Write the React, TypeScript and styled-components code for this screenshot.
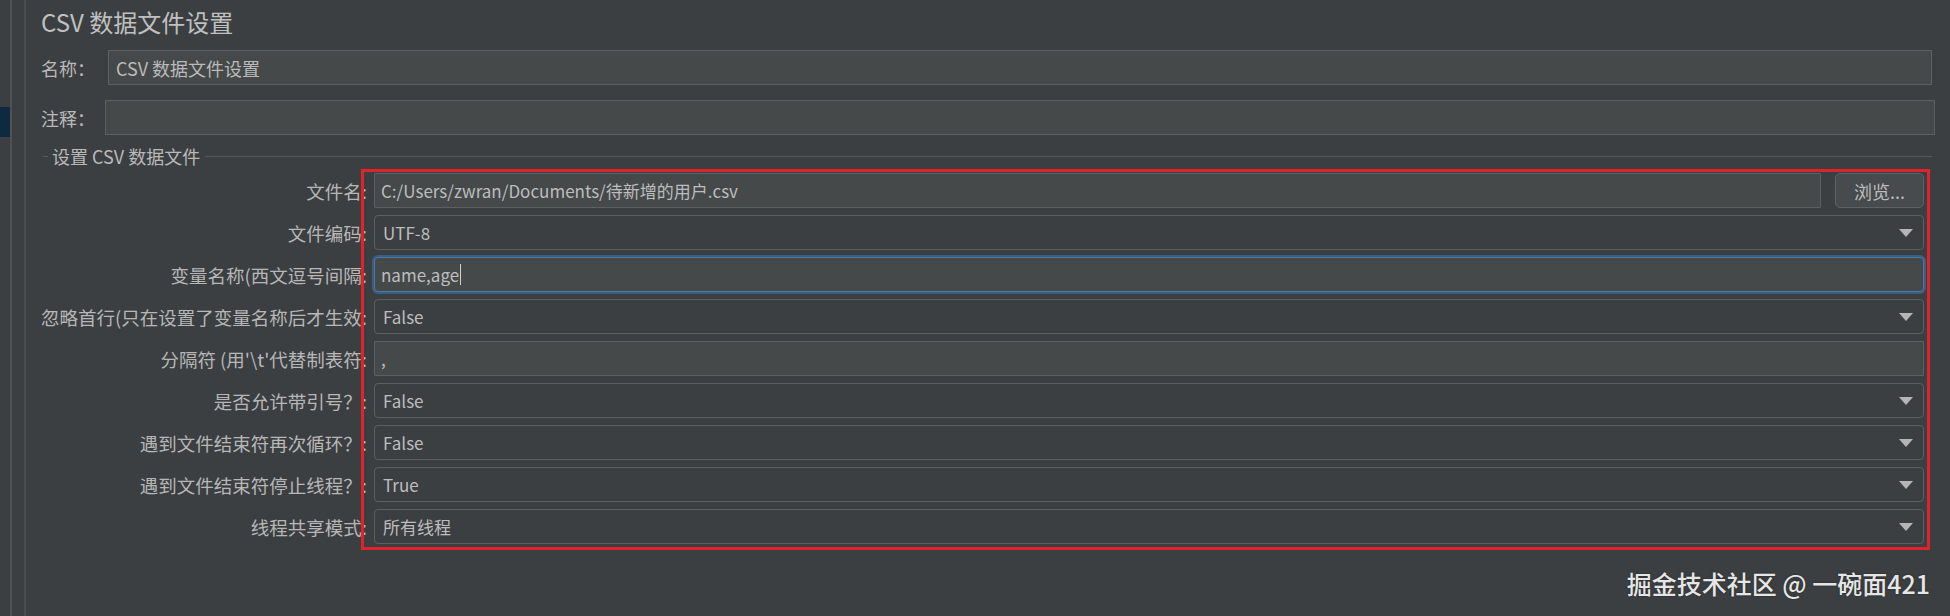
import React from "react";
import styled, { createGlobalStyle } from "styled-components";

/*
  Global
*/

const GlobalStyle = createGlobalStyle`
  html, body {
    margin: 0;
    padding: 0;
    background: #3c3f41;
  }

  body {
    font-family: "Noto Sans CJK SC", "Noto Sans", sans-serif;
  }
`;

/*
  Styled Components
*/

const Window = styled.div`
  position: relative;
  width: 1950px;
  height: 616px;
  display: flex;
  background: #3c3f41;
  color: #bbbbbb;
  overflow: hidden;
`;

const TreeStrip = styled.div`
  width: 10px;
  flex-shrink: 0;
  padding-top: 107px;
  box-sizing: border-box;
`;

const TreeSelection = styled.div`
  height: 30px;
  background: #0e2a40;
`;

const Divider = styled.div<{ $width: number; $color: string }>`
  width: ${(p) => p.$width}px;
  flex-shrink: 0;
  background: ${(p) => p.$color};
`;

const Gutter = styled.div`
  width: 12px;
  flex-shrink: 0;
`;

const Panel = styled.div`
  flex: 1;
  min-width: 0;
  padding: 0 15px;
  display: flex;
  flex-direction: column;
`;

const Title = styled.div`
  height: 44px;
  line-height: 44px;
  font-size: 24px;
  color: #c0c0c0;
  white-space: nowrap;
`;

const HeaderRow = styled.div<{ $top: number; $right: number }>`
  display: flex;
  align-items: center;
  height: 35px;
  margin-top: ${(p) => p.$top}px;
  margin-right: ${(p) => p.$right}px;
`;

const HeaderLabel = styled.div<{ $width: number }>`
  width: ${(p) => p.$width}px;
  flex-shrink: 0;
  font-size: 18px;
  color: #b9b9b9;
  white-space: nowrap;
`;

const PlainField = styled.div`
  flex: 1;
  height: 35px;
  box-sizing: border-box;
  display: flex;
  align-items: center;
  padding: 0 7px;
  background: #45494a;
  border: 1px solid #5d6061;
  font-size: 18px;
  color: #bbbbbb;
  white-space: nowrap;
`;

const GroupHeader = styled.div`
  display: flex;
  align-items: center;
  height: 20px;
  margin: 11px 3px 0 2px;
`;

const GroupDash = styled.div`
  width: 5px;
  height: 1px;
  background: #5a5d5f;
`;

const GroupTitle = styled.div`
  padding: 0 5px 0 4px;
  font-size: 18px;
  color: #b9b9b9;
  white-space: nowrap;
`;

const GroupLine = styled.div`
  flex: 1;
  height: 1px;
  background: #55585a;
`;

const Form = styled.div`
  display: grid;
  grid-template-columns: 326px 1fr;
  grid-auto-rows: 35px;
  column-gap: 7px;
  row-gap: 7px;
  margin: 7px 11px 0 0;
`;

const Label = styled.div`
  grid-column: 1;
  display: flex;
  justify-content: flex-end;
  align-items: center;
  min-width: 0;
  font-size: 18.5px;
  color: #b7b7b7;
  white-space: nowrap;
`;

const FieldCell = styled.div`
  grid-column: 2;
  display: flex;
  gap: 14px;
  min-width: 0;
`;

const TextInput = styled.div<{ $focused?: boolean }>`
  flex: 1;
  min-width: 0;
  box-sizing: border-box;
  display: flex;
  align-items: center;
  padding: 0 6px;
  background: #45494a;
  border: 1px solid ${(p) => (p.$focused ? "#4b79a6" : "#5d6061")};
  border-radius: ${(p) => (p.$focused ? 4 : 1)}px;
  box-shadow: ${(p) => (p.$focused ? "0 0 0 2px #3a5d80" : "none")};
  font-size: 17px;
  color: #bdbdbd;
  white-space: nowrap;
`;

const Caret = styled.span`
  display: inline-block;
  width: 1px;
  height: 21px;
  margin-left: 1px;
  background: #d0d0d0;
`;

const Dropdown = styled.div`
  flex: 1;
  min-width: 0;
  box-sizing: border-box;
  display: flex;
  align-items: center;
  padding: 0 10px 0 8px;
  background: #3c3f41;
  border: 1px solid #5c5f60;
  border-radius: 4px;
  font-size: 17px;
  color: #bdbdbd;
  white-space: nowrap;
`;

const DropValue = styled.span`
  flex: 1;
`;

const BrowseButton = styled.div`
  width: 89px;
  flex-shrink: 0;
  box-sizing: border-box;
  display: flex;
  align-items: center;
  justify-content: center;
  background: #474b4d;
  border: 1px solid #5f6263;
  border-radius: 5px;
  font-size: 18px;
  color: #bbbbbb;
`;

const Highlight = styled.div`
  position: relative;
  grid-column: 2;
  grid-row: 1 / span 9;
  margin: -4px -6px -6px -13px;
  border: 3px solid #e0232b;
  pointer-events: none;
`;

const Watermark = styled.div`
  position: absolute;
  right: 20px;
  bottom: 17px;
  font-size: 25px;
  font-weight: 500;
  line-height: 32px;
  color: #e6e6e6;
  text-shadow: 0 0 2px rgba(0, 0, 0, 0.5);
  white-space: nowrap;
`;

function Arrow() {
  return (
    <svg width="14" height="8" viewBox="0 0 14 8">
      <polygon points="0,0 14,0 7,8" fill="#b5b5b5" />
    </svg>
  );
}

type Row = {
  label: string;
  kind: "file" | "select" | "text" | "focus";
  value: string;
};

const rows: Row[] = [
  { label: "文件名:", kind: "file", value: "C:/Users/zwran/Documents/待新增的用户.csv" },
  { label: "文件编码:", kind: "select", value: "UTF-8" },
  { label: "变量名称(西文逗号间隔:", kind: "focus", value: "name,age" },
  { label: "忽略首行(只在设置了变量名称后才生效:", kind: "select", value: "False" },
  { label: "分隔符 (用'\\t'代替制表符:", kind: "text", value: "," },
  { label: "是否允许带引号？:", kind: "select", value: "False" },
  { label: "遇到文件结束符再次循环？:", kind: "select", value: "False" },
  { label: "遇到文件结束符停止线程？:", kind: "select", value: "True" },
  { label: "线程共享模式:", kind: "select", value: "所有线程" },
];

function renderField(row: Row) {
  switch (row.kind) {
    case "file":
      return (
        <>
          <TextInput>{row.value}</TextInput>
          <BrowseButton>浏览...</BrowseButton>
        </>
      );
    case "select":
      return (
        <Dropdown>
          <DropValue>{row.value}</DropValue>
          <Arrow />
        </Dropdown>
      );
    case "focus":
      return (
        <TextInput $focused>
          {row.value}
          <Caret />
        </TextInput>
      );
    default:
      return <TextInput>{row.value}</TextInput>;
  }
}

export default function App() {
  return (
    <Window>
      <GlobalStyle />
      <TreeStrip>
        <TreeSelection />
      </TreeStrip>
      <Divider $width={2} $color="#4e5254" />
      <Gutter />
      <Divider $width={2} $color="#4a4d4f" />
      <Panel>
        <Title>CSV 数据文件设置</Title>

        <HeaderRow $top={6} $right={3}>
          <HeaderLabel $width={67}>名称：</HeaderLabel>
          <PlainField>CSV 数据文件设置</PlainField>
        </HeaderRow>
        <HeaderRow $top={15} $right={0}>
          <HeaderLabel $width={64}>注释：</HeaderLabel>
          <PlainField />
        </HeaderRow>

        <GroupHeader>
          <GroupDash />
          <GroupTitle>设置 CSV 数据文件</GroupTitle>
          <GroupLine />
        </GroupHeader>

        <Form>
          {rows.map((row, i) => (
            <React.Fragment key={i}>
              <Label style={{ gridRow: i + 1 }}>{row.label}</Label>
              <FieldCell style={{ gridRow: i + 1 }}>{renderField(row)}</FieldCell>
            </React.Fragment>
          ))}
          <Highlight />
        </Form>
      </Panel>
      <Watermark>掘金技术社区 @ 一碗面421</Watermark>
    </Window>
  );
}
